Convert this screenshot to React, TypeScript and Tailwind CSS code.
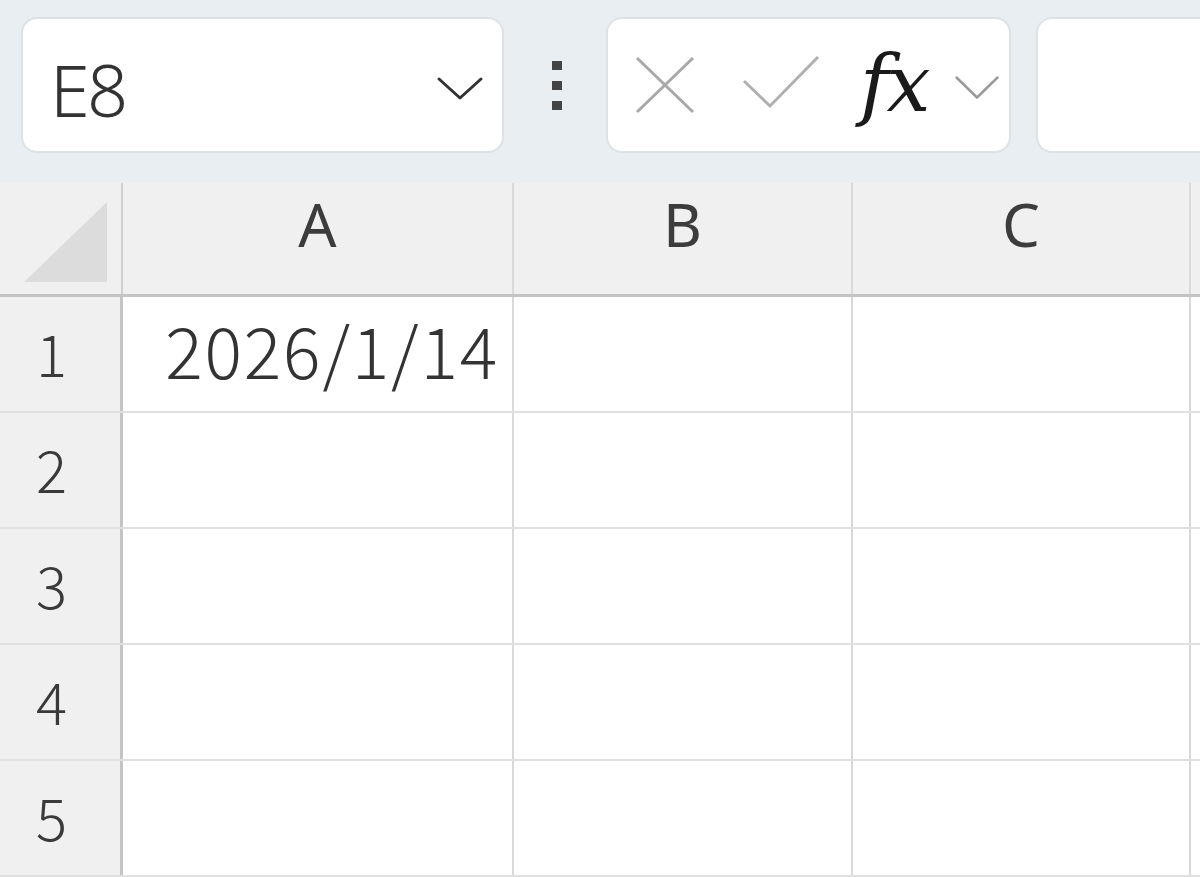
const cols = [
  { key: "A", w: "w-[391px]" },
  { key: "B", w: "w-[339px]" },
  { key: "C", w: "w-[338px]" },
];

const rows = [1, 2, 3, 4, 5];

function XIcon() {
  return (
    <svg width="60" height="58" viewBox="0 0 60 58" fill="none" stroke="#a8a8a8" strokeWidth="3">
      <path d="M2 2 L58 56 M58 2 L2 56" />
    </svg>
  );
}

function CheckIcon() {
  return (
    <svg width="78" height="54" viewBox="0 0 78 54" fill="none" stroke="#b0b0b0" strokeWidth="3">
      <path d="M2 26 L28 51 L76 2" />
    </svg>
  );
}

function Chevron({ w, h, color, stroke }: { w: number; h: number; color: string; stroke: number }) {
  return (
    <svg width={w} height={h} viewBox={`0 0 ${w} ${h}`} fill="none" stroke={color} strokeWidth={stroke} strokeLinecap="round" strokeLinejoin="round">
      <path d={`M${stroke} ${stroke} L${w / 2} ${h - stroke} L${w - stroke} ${stroke}`} />
    </svg>
  );
}

export default function App() {
  return (
    <div className="w-[1200px] h-[877px] overflow-hidden bg-white" style={{ fontFamily: "'Noto Sans', sans-serif" }}>
      {/* Formula bar */}
      <div className="h-[183px] bg-[#e8eef1] flex items-start pt-[17px] pl-[21px]">
        <div className="w-[483px] h-[136px] bg-white rounded-[16px] border-2 border-[#dde2e5] flex items-center justify-between pl-[27px] pr-[18px]">
          <span className="text-[72px] leading-none text-[#333] font-light tracking-[-0.04em] mt-[8px]">E8</span>
          <div className="mt-[6px]">
            <Chevron w={48} h={25} color="#333" stroke={3} />
          </div>
        </div>
        <div className="w-[102px] h-[136px] flex flex-col items-center justify-center gap-[11px] pl-[4px]">
          <div className="w-[10px] h-[9px] bg-[#444]" />
          <div className="w-[10px] h-[9px] bg-[#444]" />
          <div className="w-[10px] h-[9px] bg-[#444]" />
        </div>
        <div className="w-[405px] h-[136px] bg-white rounded-[16px] border-2 border-[#dde2e5] flex items-center pl-[27px]">
          <XIcon />
          <div className="ml-[47px] mb-[6px]">
            <CheckIcon />
          </div>
          <span
            className="ml-[40px] text-[78px] leading-none italic text-[#1a1a1a] tracking-[-0.03em] mb-[2px]"
            style={{ fontFamily: "'DejaVu Serif', serif" }}
          >
            fx
          </span>
          <div className="ml-[26px] mt-[4px]">
            <Chevron w={46} h={25} color="#9a9a9a" stroke={2.5} />
          </div>
        </div>
        <div className="ml-[25px] flex-1 h-[136px] bg-white rounded-l-[16px] border-2 border-r-0 border-[#dde2e5]" />
      </div>

      {/* Column headers */}
      <div className="flex h-[114px] bg-[#f0f0f0] border-b-[3px] border-[#c4c4c4]">
        <div className="w-[123px] flex items-end justify-end pr-[14px] pb-[12px] border-r-[2px] border-[#d0d0d0]">
          <div className="w-0 h-0 border-l-[83px] border-l-transparent border-b-[80px] border-b-[#dcdcdc]" />
        </div>
        {cols.map(c => (
          <div
            key={c.key}
            className={`${c.w} flex items-center justify-center border-r-[2px] border-[#d9d9d9] text-[60px] leading-none text-[#3c3c3c] pb-[30px]`}
          >
            {c.key}
          </div>
        ))}
        <div className="flex-1" />
      </div>

      {/* Grid rows */}
      {rows.map(r => (
        <div key={r} className="flex h-[116px] border-b-[2px] border-[#e0e0e0]">
          <div
            className="w-[123px] bg-[#f0f0f0] border-r-[3px] border-[#c4c4c4] flex items-end pl-[36px] pb-[30px] text-[58px] leading-none text-[#3a3a3a] font-light"
            style={{ fontFamily: "'Noto Sans CJK JP', sans-serif" }}
          >
            {r}
          </div>
          <div
            className="w-[391px] border-r-[2px] border-[#d9d9d9] flex items-end justify-end pr-[13px] pb-[27px] text-[70px] leading-none text-[#333] font-light tracking-[0.026em]"
            style={{ fontFamily: "'Noto Sans CJK JP', sans-serif" }}
          >
            {r === 1 ? "2026/1/14" : ""}
          </div>
          <div className="w-[339px] border-r-[2px] border-[#d9d9d9]" />
          <div className="w-[338px] border-r-[2px] border-[#d9d9d9]" />
          <div className="flex-1" />
        </div>
      ))}
    </div>
  );
}
